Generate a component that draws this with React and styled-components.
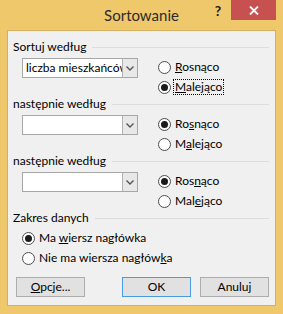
import React from 'react'
import styled, { createGlobalStyle } from 'styled-components'

const GlobalStyle = createGlobalStyle`
  html, body {
    margin: 0;
    padding: 0;
    background: #f0c86c;
  }
`

const Frame = styled.div`
  width: 283px;
  height: 314px;
  box-sizing: border-box;
  background: #f0c86c;
  display: flex;
  flex-direction: column;
  padding: 0 7px 8px 7px;
  font-family: "Segoe UI", Lato, "Noto Sans", sans-serif;
  font-size: 12px;
  color: #000;
`

const TitleBar = styled.div`
  height: 30px;
  display: grid;
  grid-template-columns: 1fr auto 1fr;
  margin: 0 -7px;
`

const Title = styled.div`
  grid-column: 2;
  align-self: center;
  font-size: 15px;
  color: #2b2b2b;
  padding-bottom: 1px;
`

const Controls = styled.div`
  grid-column: 3;
  justify-self: end;
  display: flex;
  align-items: flex-start;
  margin-right: 7px;
`

const HelpButton = styled.div`
  width: 26px;
  height: 20px;
  display: flex;
  align-items: center;
  justify-content: center;
  font-weight: bold;
  font-size: 14px;
  color: #1e1e1e;
  padding-top: 1px;
  box-sizing: border-box;
`

const CloseButton = styled.div`
  width: 45px;
  height: 20px;
  background: #c75050;
  display: flex;
  align-items: center;
  justify-content: center;
`

const Client = styled.div`
  flex: 1;
  background: #f0f0f0;
  border: 1px solid #d5b060;
  padding: 8px 5px 0 5px;
  display: flex;
  flex-direction: column;
`

const Section = styled.div`
  height: 57px;
  display: flex;
  flex-direction: column;
`

const Header = styled.div`
  height: 16px;
  display: flex;
  align-items: center;
  gap: 6px;
  line-height: 16px;
  &::after {
    content: '';
    flex: 1;
    height: 1px;
    background: #dcdcdc;
    margin-right: 1px;
  }
`

const Row = styled.div`
  display: flex;
  align-items: flex-start;
  padding-left: ${props => props.indent || 0}px;
  gap: 20px;
`

const Combo = styled.div`
  margin-top: 3px;
  width: 116px;
  height: 20px;
  box-sizing: border-box;
  border: 1px solid #a7a7a7;
  background: #fff;
  display: flex;
`

const ComboText = styled.div`
  flex: 1;
  overflow: hidden;
  white-space: nowrap;
  padding-left: 3px;
  line-height: 18px;
`

const ComboButton = styled.div`
  width: 14px;
  background: #e8e8e8;
  border-left: 1px solid #b3b3b3;
  display: flex;
  align-items: center;
  justify-content: center;
`

const RadioGroup = styled.div`
  margin-top: 2px;
  display: flex;
  flex-direction: column;
`

const RadioRow = styled.div`
  height: 20px;
  display: flex;
  align-items: center;
  gap: 3px;
`

const Circle = styled.div`
  width: 13px;
  height: 13px;
  box-sizing: border-box;
  border-radius: 50%;
  border: 1px solid #4d4d4d;
  background: #fff;
  display: flex;
  align-items: center;
  justify-content: center;
  &::after {
    content: '';
    width: 7px;
    height: 7px;
    border-radius: 50%;
    background: ${props => props.checked ? '#1a1a1a' : 'transparent'};
  }
`

const Label = styled.span`
  line-height: 14px;
  padding: 0 1px;
  outline: ${props => props.focused ? '1px dotted #000' : 'none'};
`

const U = styled.span`
  text-decoration: underline;
`

const Buttons = styled.div`
  margin-top: 10px;
  display: flex;
  gap: 9px;
  padding: 0 1px 0 3px;
`

const Button = styled.div`
  width: 69px;
  height: 20px;
  box-sizing: border-box;
  border: 1px solid ${props => props.focused ? '#4a9be6' : '#adadad'};
  background: #e1e1e1;
  display: flex;
  align-items: center;
  justify-content: center;
  line-height: 16px;
  margin-left: ${props => props.push ? 'auto' : '0'};
`

const Chevron = () => (
  <svg width="8" height="5" viewBox="0 0 8 5">
    <polyline points="0.5,0.5 4,4 7.5,0.5" fill="none" stroke="#555" strokeWidth="1.4" />
  </svg>
)

const Radio = ({ checked, focused, children }) => (
  <RadioRow>
    <Circle checked={checked} />
    <Label focused={focused}>{children}</Label>
  </RadioRow>
)

const SortSection = ({ title, value, asc, up, down }) => (
  <Section>
    <Header>{title}</Header>
    <Row indent={9}>
      <Combo>
        <ComboText>{value}</ComboText>
        <ComboButton><Chevron /></ComboButton>
      </Combo>
      <RadioGroup>
        <Radio checked={asc}>{up}</Radio>
        <Radio checked={!asc} focused={!asc}>{down}</Radio>
      </RadioGroup>
    </Row>
  </Section>
)

const App = () => {
  return (
    <>
      <GlobalStyle />
      <Frame>
        <TitleBar>
          <Title>Sortowanie</Title>
          <Controls>
            <HelpButton>?</HelpButton>
            <CloseButton>
              <svg width="10" height="9" viewBox="0 0 10 9">
                <path d="M1 0.5 L9 8.5 M9 0.5 L1 8.5" stroke="#fff" strokeWidth="1.8" />
              </svg>
            </CloseButton>
          </Controls>
        </TitleBar>
        <Client>
          <SortSection
            title="Sortuj według"
            value="liczba mieszkańców na km²"
            asc={false}
            up={<><U>R</U>osnąco</>}
            down={<><U>M</U>alejąco</>}
          />
          <SortSection
            title="następnie według"
            value=""
            asc={true}
            up={<>Ro<U>s</U>nąco</>}
            down={<>M<U>a</U>lejąco</>}
          />
          <SortSection
            title="następnie według"
            value=""
            asc={true}
            up={<>Ros<U>n</U>ąco</>}
            down={<>Mal<U>e</U>jąco</>}
          />
          <Section>
            <Header>Zakres danych</Header>
            <Row indent={9}>
              <RadioGroup>
                <Radio checked>Ma <U>w</U>iersz nagłówka</Radio>
                <Radio>Nie ma wiersza nagłów<U>k</U>a</Radio>
              </RadioGroup>
            </Row>
          </Section>
          <Buttons>
            <Button><span><U>O</U>pcje...</span></Button>
            <Button push focused>OK</Button>
            <Button>Anuluj</Button>
          </Buttons>
        </Client>
      </Frame>
    </>
  )
}

export default App
